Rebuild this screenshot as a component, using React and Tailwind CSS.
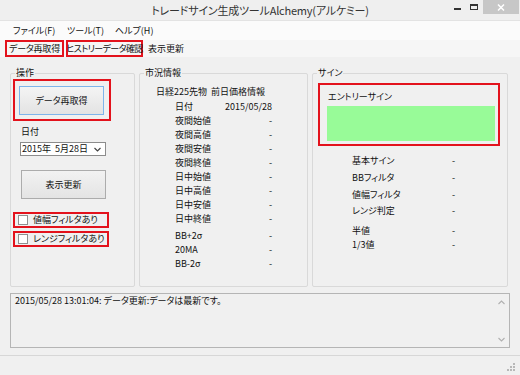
import React from "react";

const F = "font-['Noto_Sans_CJK_JP','Noto_Sans',sans-serif] [font-feature-settings:'palt']";

function Row({ label, value, className = "" }) {
  return (
    <div className={"flex h-[14px] items-center justify-between leading-[14px] " + className}>
      <span>{label}</span>
      <span>{value}</span>
    </div>
  );
}

function SignRow({ label, className = "" }) {
  return (
    <div className={"flex h-[14px] items-center leading-[14px] " + className}>
      <span className="w-[100px]">{label}</span>
      <span>-</span>
    </div>
  );
}

function Group({ label, className = "", children }) {
  return (
    <div className={"relative h-[214px] border border-[#d9d9d9] rounded-[2px] " + className}>
      <span className="absolute -top-[7px] left-[4px] bg-[#f0f0f0] px-[1px] leading-[12px] text-[9px]">{label}</span>
      {children}
    </div>
  );
}

export default function App() {
  return (
    <div className={"w-[520px] h-[375px] bg-[#f0f0f0] flex flex-col text-[9px] text-[#111] overflow-hidden whitespace-nowrap " + F}>
      {/* Title bar */}
      <div className="relative h-[21px] flex items-center justify-center bg-[#efefef] border-b border-[#e3e3e3]">
        <span className="text-[11px] text-[#333] leading-[14px] tracking-[-0.2px]">トレードサイン生成ツールAlchemy(アルケミー)</span>
        <div className="absolute right-[1px] top-0 flex items-start">
          <div className="w-[20px] h-[14px] flex items-center justify-center">
            <div className="w-[7px] h-[2px] bg-[#333] mt-[4px]"></div>
          </div>
          <div className="w-[14px] h-[14px] flex items-center justify-center">
            <div className="w-[8px] h-[6px] border border-[#333] border-t-2"></div>
          </div>
          <div className="w-[36px] h-[14px] bg-[#c7c7c7] ml-[2px] flex items-center justify-center">
            <svg width="8" height="7" viewBox="0 0 8 7">
              <path d="M1 0.5 L7 6.5 M7 0.5 L1 6.5" stroke="#fff" strokeWidth="1.5" />
            </svg>
          </div>
        </div>
      </div>

      {/* Menu bar */}
      <div className="h-[19px] flex items-center bg-[#fbfbfb] pl-[13px]">
        <span className="w-[54px]">ファイル(F)</span>
        <span className="w-[48px]">ツール(T)</span>
        <span>ヘルプ(H)</span>
      </div>

      {/* Toolbar */}
      <div className="h-[17px] flex items-center bg-[#f6f6f6] pl-[5px] gap-[2px]">
        <div className="w-[59px] h-[17px] border-2 border-[#e3121c] flex items-center justify-center leading-[12px] tracking-[-0.2px]">データ再取得</div>
        <div className="w-[77px] h-[17px] border-2 border-[#e3121c] flex items-center justify-center leading-[12px] tracking-[-0.6px]">ヒストリーデータ確認</div>
        <span className="ml-[3px]">表示更新</span>
      </div>

      {/* Main */}
      <div className="flex-1 flex flex-col px-[10px] pt-[16px]">
        <div className="flex">
          {/* 操作 */}
          <Group label="操作" className="w-[125px]">
            <div className="flex flex-col pl-[2px]">
              <div className="mt-[5px] w-[98px] h-[42px] border-2 border-[#e3121c] pl-[4px] pt-[5px]">
                <div className="w-[85px] h-[29px] border border-[#7eb4ea] bg-gradient-to-b from-[#f4f4f4] to-[#e3e3e3] flex items-center justify-center">
                  データ再取得
                </div>
              </div>
              <div className="ml-[8px] mt-[5px] leading-[12px]">日付</div>
              <div className="ml-[7px] mt-[4px] w-[86px] h-[14px] bg-white border border-[#8c8c8c] flex items-center justify-between pl-[1px] pr-[4px] leading-[12px]">
                <span>2015年&nbsp;&nbsp;5月28日</span>
                <svg width="7" height="5" viewBox="0 0 7 5">
                  <path d="M0.5 1 L3.5 4 L6.5 1" stroke="#444" strokeWidth="1.2" fill="none" />
                </svg>
              </div>
              <div className="ml-[8px] mt-[14px] w-[85px] h-[29px] border border-[#acacac] bg-gradient-to-b from-[#f2f2f2] to-[#e4e4e4] flex items-center justify-center">
                表示更新
              </div>
              <div className="mt-[13px] w-[96px] h-[16px] border-2 border-[#e3121c] flex items-center pl-[3px] gap-[5px] leading-[12px]">
                <div className="w-[10px] h-[10px] bg-white border border-[#8f8f8f]"></div>
                <span>値幅フィルタあり</span>
              </div>
              <div className="mt-[3px] w-[96px] h-[16px] border-2 border-[#e3121c] flex items-center pl-[3px] gap-[5px] leading-[12px]">
                <div className="w-[10px] h-[10px] bg-white border border-[#8f8f8f]"></div>
                <span>レンジフィルタあり</span>
              </div>
            </div>
          </Group>

          {/* 市況情報 */}
          <Group label="市況情報" className="w-[169px] ml-[4px]">
            <div className="flex flex-col">
              <div className="mt-[12px] pl-[16px] leading-[12px]">日経225先物&nbsp;&nbsp;前日価格情報</div>
              <div className="mt-[2px] ml-[35px] w-[97px] flex flex-col">
                <Row label="日付" value="2015/05/28" />
                <Row label="夜間始値" value="-" />
                <Row label="夜間高値" value="-" />
                <Row label="夜間安値" value="-" />
                <Row label="夜間終値" value="-" />
                <Row label="日中始値" value="-" />
                <Row label="日中高値" value="-" />
                <Row label="日中安値" value="-" />
                <Row label="日中終値" value="-" />
                <Row label="BB+2σ" value="-" className="mt-[3px]" />
                <Row label="20MA" value="-" />
                <Row label="BB-2σ" value="-" />
              </div>
            </div>
          </Group>

          {/* サイン */}
          <Group label="サイン" className="w-[196px] ml-[4px]">
            <div className="flex flex-col">
              <div className="ml-[5px] mt-[9px] w-[182px] h-[63px] border-2 border-[#e3121c] pl-[7px] pt-[6px]">
                <div className="leading-[12px] pl-[1px]">エントリーサイン</div>
                <div className="mt-[3px] w-[168px] h-[35px] bg-[#98fb98]"></div>
              </div>
              <div className="pl-[39px] flex flex-col">
                <SignRow label="基本サイン" className="mt-[8px]" />
                <SignRow label="BBフィルタ" className="mt-[3px]" />
                <SignRow label="値幅フィルタ" className="mt-[3px]" />
                <SignRow label="レンジ判定" className="mt-[2px]" />
                <SignRow label="半値" className="mt-[6px]" />
                <SignRow label="1/3値" />
              </div>
            </div>
          </Group>
        </div>

        {/* Log */}
        <div className="mt-[6px] h-[55px] border border-[#b5b5b5] bg-[#f0f0f0] flex justify-between pl-[4px] pt-[1px]">
          <span className="leading-[12px]">2015/05/28 13:01:04: データ更新:データは最新です。</span>
          <div className="flex flex-col justify-between items-center w-[16px] py-[5px]">
            <svg width="7" height="5" viewBox="0 0 7 5">
              <path d="M0.5 4 L3.5 1 L6.5 4" stroke="#b0b0b0" strokeWidth="1.1" fill="none" />
            </svg>
            <svg width="7" height="5" viewBox="0 0 7 5">
              <path d="M0.5 1 L3.5 4 L6.5 1" stroke="#b0b0b0" strokeWidth="1.1" fill="none" />
            </svg>
          </div>
        </div>
      </div>

      {/* Status bar */}
      <div className="h-[20px] border-t border-[#d7d7d7] flex justify-end items-end pr-[5px] pb-[4px] mt-[6px]">
        <svg width="8" height="8" viewBox="0 0 8 8">
          <rect x="6" y="0" width="2" height="2" fill="#b8b8b8" />
          <rect x="3" y="3" width="2" height="2" fill="#b8b8b8" />
          <rect x="6" y="3" width="2" height="2" fill="#b8b8b8" />
          <rect x="0" y="6" width="2" height="2" fill="#b8b8b8" />
          <rect x="3" y="6" width="2" height="2" fill="#b8b8b8" />
          <rect x="6" y="6" width="2" height="2" fill="#b8b8b8" />
        </svg>
      </div>
    </div>
  );
}
